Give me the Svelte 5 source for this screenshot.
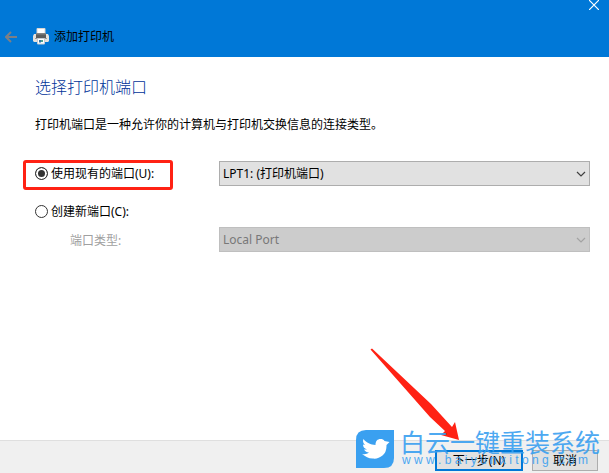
<script lang="ts">
    let portMode = $state("existing");
    let existingPort = $state("LPT1: (打印机端口)");
    let portType = $state("Local Port");
</script>

<div class="wizard">
    <header>
        <div class="titleRow">
            <button class="iconButton" type="button" aria-label="返回">
                <svg width="12" height="12" viewBox="0 0 12 12">
                    <path d="M12 6H1.5M6 1L1 6l5 5" fill="none" stroke="#7b7f86" stroke-width="2" />
                </svg>
            </button>
            <svg class="printer" width="16" height="17" viewBox="0 0 16 17">
                <path d="M4 0.5h8v6H4z" fill="#fff" stroke="#d9d4d0" />
                <path d="M1 6h14l1 2v5l-1 1H1l-1-1V8z" fill="#e4e1dd" />
                <path d="M3 5h10v5H3z" fill="#5c5c5c" />
                <path d="M3 5h10v1.500H3z" fill="#858585" />
                <path d="M2 10h12v1H2z" fill="#9a9a9a" />
                <path d="M4.500 10.500h7v5.500h-7z" fill="#fff" stroke="#c3cbd2" />
                <path d="M6 12h2v2.500H6z" fill="#3274a8" />
                <path d="M8 12h2v2H8z" fill="#4da391" />
            </svg>
            <span>添加打印机</span>
        </div>
        <button class="iconButton close" type="button" aria-label="关闭">
            <svg width="10" height="10" viewBox="0 0 10 10">
                <path d="M0 0l10 10M10 0L0 10" fill="none" stroke="#fff" stroke-width="1.2" />
            </svg>
        </button>
    </header>

    <main>
        <h1>选择打印机端口</h1>
        <p>打印机端口是一种允许你的计算机与打印机交换信息的连接类型。</p>

        <form id="portForm">
            <div class="row">
                <label class="choice marked">
                    <input type="radio" name="port" value="existing" bind:group={portMode} />
                    使用现有的端口(U):
                </label>
                <div class="selectBox">
                    <select aria-label="使用现有的端口" bind:value={existingPort}>
                        <option>LPT1: (打印机端口)</option>
                    </select>
                    <svg width="10" height="6" viewBox="0 0 10 6">
                        <path d="M1 1l4 4 4-4" fill="none" stroke="#404040" stroke-width="1.2" />
                    </svg>
                </div>
            </div>
            <div class="row">
                <label class="choice">
                    <input type="radio" name="port" value="new" bind:group={portMode} />
                    创建新端口(C):
                </label>
            </div>
            <div class="row typeRow">
                <label class="typeLabel" for="portType">端口类型:</label>
                <div class="selectBox">
                    <select id="portType" disabled={portMode !== "new"} bind:value={portType}>
                        <option>Local Port</option>
                    </select>
                    <svg width="10" height="6" viewBox="0 0 10 6">
                        <path d="M1 1l4 4 4-4" fill="none" stroke="#a3a3a3" stroke-width="1.2" />
                    </svg>
                </div>
            </div>
        </form>
    </main>

    <footer>
        <button class="next" type="submit" form="portForm">下一步(N)</button>
        <button class="cancel" type="button">取消</button>

        <svg class="pointer" width="90" height="94" viewBox="0 0 90 94">
            <path d="M0.500 1.500L2 0.500 61 56 82 79l3-5 4 18-18-5 4-4L60 69z" fill="#ff2214" />
        </svg>

        <div class="watermark">
            <svg width="38" height="38" viewBox="0 0 38 38">
                <path d="M10 0H38V28Q38 38 28 38H0V10Q0 0 10 0z" fill="#3aa0f0" />
                <path
                    d="M7.500 9c3 4 7 5.500 12 6 0-4 2-6 5-6 2 0 3 0.500 4 2l5 1-3 3c0 5-1 8-4 10.500-3 2.500-6 3.500-10 3-4 0-7-2-10.500-4.500 3 0.500 5 0 7-1.500-2 0-4-1-5-3h3c-3-1-4-3-4-5l2 0.500c-2-2-2.500-4-1.500-6z"
                    fill="#fff"
                />
            </svg>
            <div class="brand">
                <strong>白云一键重装系统</strong>
                <span>w w w . b a i y u n x i t o n g . c o m</span>
            </div>
        </div>
    </footer>
</div>

<style>
    :global(body) {
        margin: 0;
    }

    .wizard {
        min-height: 100vh;
        display: flex;
        flex-direction: column;
        background-color: #fff;
        color: #000;
        font-family: "Noto Sans", "Noto Sans CJK SC", sans-serif;
        font-size: 12px;
        line-height: 16px;
    }

    button,
    select {
        font: inherit;
        color: inherit;
    }

    header {
        display: flex;
        justify-content: space-between;
        align-items: flex-start;
        box-sizing: border-box;
        height: 57px;
        padding: 0 10px 0 5px;
        background-color: #0078d7;
    }

    .titleRow {
        display: flex;
        align-items: center;
        padding-top: 28px;
    }

    .printer {
        margin: 0 5px 0 16px;
    }

    .iconButton {
        display: flex;
        padding: 0;
        border: none;
        background: none;
    }

    main {
        flex: 1;
        padding: 18px 19px 24px 35px;
    }

    h1 {
        margin: 0;
        color: #003399;
        font-size: 16px;
        font-weight: 300;
        line-height: 24px;
    }

    p {
        margin: 18px 0 28px;
    }

    .row {
        display: flex;
        align-items: center;
        height: 25px;
        margin-bottom: 13px;
    }

    .typeRow {
        margin-top: -10px;
    }

    .choice,
    .typeLabel {
        position: relative;
        box-sizing: border-box;
        width: 184px;
    }

    .choice {
        display: flex;
        align-items: center;
        gap: 3px;
    }

    .typeLabel {
        padding: 3px 0 0 35px;
        color: #a0a0a0;
    }

    /* red frame round the chosen option */
    .marked::after {
        content: "";
        position: absolute;
        inset: -6px 46px -8px -12px;
        border: 3px solid #ff2214;
        border-radius: 3px;
    }

    input {
        appearance: none;
        box-sizing: border-box;
        width: 13px;
        height: 13px;
        margin: 0;
        border: 1px solid #333;
        border-radius: 50%;
        background-color: #fff;
    }

    input:checked {
        background-color: #333;
        box-shadow: inset 0 0 0 2px #fff;
    }

    .selectBox {
        position: relative;
        flex: 1;
    }

    .selectBox svg {
        position: absolute;
        right: 4px;
        top: 10px;
        pointer-events: none;
    }

    select {
        display: block;
        appearance: none;
        width: 100%;
        height: 25px;
        padding: 0 20px 0 3px;
        border: 1px solid #adadad;
        border-radius: 0;
        background-color: #e1e1e1;
    }

    select:disabled {
        border-color: #bfbfbf;
        background-color: #ccc;
        color: #787878;
        opacity: 1;
    }

    footer {
        position: relative;
        display: flex;
        justify-content: flex-end;
        gap: 9px;
        padding: 9px 11px 2px;
        border-top: 1px solid #dfdfdf;
        background-color: #f0f0f0;
    }

    footer button {
        box-sizing: border-box;
        height: 21px;
        padding: 0;
        background-color: #e1e1e1;
        line-height: 17px;
    }

    .next {
        width: 88px;
        border: 2px solid #0078d7;
    }

    .cancel {
        width: 66px;
        border: 1px solid #adadad;
    }

    .pointer {
        position: absolute;
        right: 149px;
        bottom: 31px;
        pointer-events: none;
    }

    .watermark {
        position: absolute;
        right: 9px;
        bottom: 5px;
        display: flex;
        gap: 6px;
        pointer-events: none;
    }

    .brand {
        display: flex;
        flex-direction: column;
        width: 200px;
        color: #3aa0f0;
        white-space: nowrap;
        opacity: 0.9;
    }

    .brand strong {
        font-size: 25px;
        font-weight: 400;
        line-height: 24px;
    }

    .brand span {
        padding-left: 2px;
        font-family: "Liberation Sans", sans-serif;
        font-size: 12px;
        line-height: 12px;
    }
</style>
